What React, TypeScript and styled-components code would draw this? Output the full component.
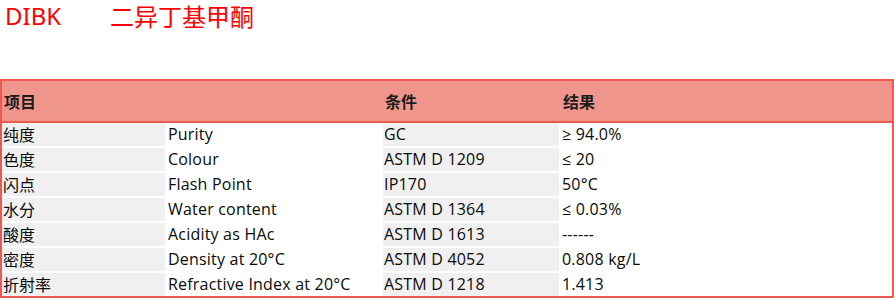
import React from "react";
import styled, { createGlobalStyle } from "styled-components";

const Global = createGlobalStyle`
  html, body { margin: 0; padding: 0; background: #fff; }
  body { font-family: "Noto Sans", "Noto Sans CJK SC", sans-serif; }
`;

const Page = styled.div`
  width: 894px;
  height: 298px;
  overflow: hidden;
`;

const Title = styled.h1`
  margin: 0;
  height: 79px;
  display: flex;
  align-items: flex-start;
  padding-left: 5px;
  font-weight: 400;
  font-size: 24px;
  line-height: 34px;
  margin-top: -1px;
  margin-bottom: 1px;
  color: #ff0000;
  font-family: "Noto Sans", "Noto Sans CJK SC", sans-serif;
`;

const Code = styled.span`
  width: 105px;
`;

const Name = styled.span`
  font-family: "Noto Sans CJK SC", sans-serif;
`;

const Table = styled.div`
  border: 2px solid #ef5850;
  box-sizing: border-box;
  width: 894px;
  height: 219px;
`;

const COLS = "163px 214px 176px 1fr";

const HeadRow = styled.div`
  display: grid;
  grid-template-columns: ${COLS};
  column-gap: 2px;
  height: 40px;
  align-items: center;
  background: #f0958b;
  border-bottom: 2px solid #ef5850;
`;

const HeadCell = styled.div`
  padding-left: 2px;
  font-family: "Noto Sans CJK SC", sans-serif;
  font-weight: 700;
  font-size: 16px;
  color: #1c1c1c;
`;

const Body = styled.div`
  display: grid;
  grid-template-columns: ${COLS};
  grid-auto-rows: 23px;
  column-gap: 2px;
  row-gap: 2px;
`;

const Cell = styled.div<{ $shade?: boolean; $cjk?: boolean }>`
  background: ${(p) => (p.$shade ? "#f0f0f0" : "#ffffff")};
  padding-left: 1px;
  font-size: 16px;
  line-height: 23px;
  color: #0a0a0a;
  white-space: pre;
  letter-spacing: ${(p) => (p.$cjk ? "0" : "0.2px")};
  font-family: ${(p) =>
    p.$cjk ? `"Noto Sans CJK SC", sans-serif` : `"Open Sans", "Noto Sans CJK SC", sans-serif`};
`;

const rows: [string, string, string, string][] = [
  ["纯度", "Purity", "GC", "≥ 94.0%"],
  ["色度", "Colour", "ASTM D 1209", "≤ 20"],
  ["闪点", "Flash Point", "IP170", "50°C"],
  ["水分", "Water content", "ASTM D 1364", "≤ 0.03%"],
  ["酸度", "Acidity as HAc", "ASTM D 1613", "------"],
  ["密度", "Density at 20°C", "ASTM D 4052", "0.808 kg/L"],
  ["折射率", "Refractive Index at 20°C", "ASTM D 1218", "1.413"],
];

export default function App() {
  return (
    <Page>
      <Global />
      <Title>
        <Code>DIBK</Code>
        <Name>二异丁基甲酮</Name>
      </Title>
      <Table>
        <HeadRow>
          <HeadCell>项目</HeadCell>
          <HeadCell />
          <HeadCell>条件</HeadCell>
          <HeadCell>结果</HeadCell>
        </HeadRow>
        <Body>
          {rows.map((r) => (
            <React.Fragment key={r[0]}>
              <Cell $shade $cjk>{r[0]}</Cell>
              <Cell>{r[1]}</Cell>
              <Cell $shade>{r[2]}</Cell>
              <Cell>{r[3]}</Cell>
            </React.Fragment>
          ))}
        </Body>
      </Table>
    </Page>
  );
}
